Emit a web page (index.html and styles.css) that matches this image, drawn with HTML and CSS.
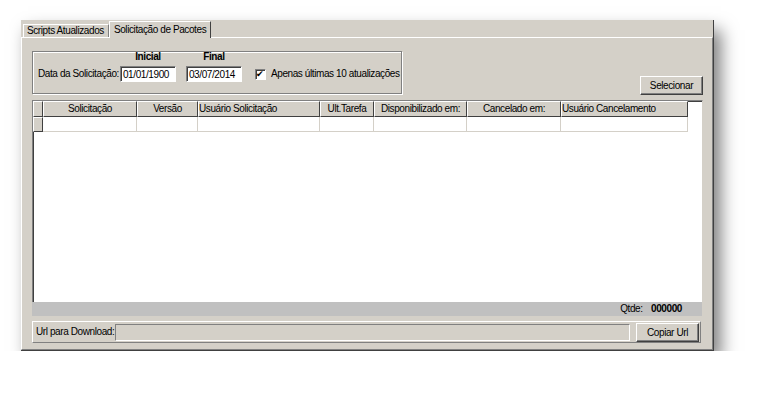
FILE: index.html
```html
<!DOCTYPE html>
<html lang="pt-BR">
<head>
    <meta charset="UTF-8">
    <title>Solicitação de Pacotes</title>
    <link rel="stylesheet" href="styles.css">
</head>
<body>
    <div class="window">
        <div class="tabs">
            <div class="tab">Scripts Atualizados</div>
            <div class="tab active">Solicitação de Pacotes</div>
        </div>
        <div class="panel">
            <div class="top-row">
                <div class="groupbox">
                    <span class="lbl">Data da Solicitação:</span>
                    <div class="datefield">
                        <span class="cap">Inicial</span>
                        <div class="edit">01/01/1900</div>
                    </div>
                    <div class="datefield">
                        <span class="cap">Final</span>
                        <div class="edit">03/07/2014</div>
                    </div>
                    <label class="check">
                        <span class="box">&#10004;</span>
                        Apenas últimas 10 atualizações
                    </label>
                </div>
                <div class="btn btn-sel">Selecionar</div>
            </div>
            <div class="grid">
                <table>
                    <colgroup>
                        <col style="width:10px"><col style="width:94px"><col style="width:61px"><col style="width:122px">
                        <col style="width:54px"><col style="width:93px"><col style="width:94px"><col style="width:127px">
                    </colgroup>
                    <thead>
                        <tr>
                            <th></th>
                            <th>Solicitação</th>
                            <th>Versão</th>
                            <th class="left">Usuário Solicitação</th>
                            <th>Ult.Tarefa</th>
                            <th>Disponibilizado em:</th>
                            <th>Cancelado em:</th>
                            <th class="left">Usuário Cancelamento</th>
                        </tr>
                    </thead>
                    <tbody>
                        <tr>
                            <td class="ind"></td>
                            <td></td><td></td><td></td><td></td><td></td><td></td><td></td>
                        </tr>
                    </tbody>
                </table>
            </div>
            <div class="status">Qtde: <b>000000</b></div>
            <div class="url-row">
                <span class="lbl">Url para Download:</span>
                <div class="url-field"></div>
                <div class="btn btn-copy">Copiar Url</div>
            </div>
        </div>
    </div>
</body>
</html>
```

FILE: styles.css
```css
body { margin: 0; background: #fff; font-family: "Liberation Sans", Arial, sans-serif; font-size: 10px; letter-spacing: -0.4px; color: #000; white-space: nowrap; }
.window { margin: 20px 0 0 21px; width: 692px; height: 330px; background: #d4d0c8; border-right: 1px solid #404040; border-bottom: 1px solid #404040; box-shadow: 7px 10px 16px rgba(0,0,0,0.5); display: flex; flex-direction: column; }
.tabs { display: flex; height: 17px; padding-left: 1px; align-items: flex-end; }
.tab { height: 12px; padding: 0 4px 0 3px; line-height: 12px; border-top: 1px solid #fff; border-left: 1px solid #fff; border-right: 1px solid #808080; background: #d4d0c8; margin-left: 1px; }
.tab.active { height: 16px; line-height: 15px; margin-left: 0; border-right: 1px solid #404040; position: relative; top: 1px; padding: 0 4px; }
.panel { flex: 1; border-top: 1px solid #fff; border-left: 1px solid #fff; border-right: 1px solid #808080; border-bottom: 1px solid #808080; padding: 13px 9px 5px 10px; display: flex; flex-direction: column; }
.top-row { display: flex; justify-content: space-between; align-items: flex-end; }
.groupbox { width: 370px; height: 43px; border: 1px solid #808080; box-shadow: inset 1px 1px 0 #fff, 1px 1px 0 #fff; display: flex; align-items: flex-end; padding: 0 0 11px 5px; box-sizing: border-box; }
.lbl { line-height: 16px; margin-right: 1px; }
.datefield { display: flex; flex-direction: column; align-items: center; margin-right: 10px; }
.cap { font-weight: bold; line-height: 12px; margin-bottom: 3px; }
.edit { width: 52px; height: 14px; background: #fff; border-top: 1px solid #808080; border-left: 1px solid #808080; border-right: 1px solid #fff; border-bottom: 1px solid #fff; box-shadow: inset 1px 1px 0 #404040; padding-left: 2px; line-height: 15px; }
.check { display: flex; align-items: center; gap: 5px; margin-left: 3px; line-height: 16px; }
.box { width: 9px; height: 9px; background: #fff; border-top: 1px solid #808080; border-left: 1px solid #808080; border-right: 1px solid #fff; border-bottom: 1px solid #fff; box-shadow: inset 1px 1px 0 #404040; font-size: 9px; line-height: 9px; text-align: center; letter-spacing: 0; }
.btn { height: 17px; line-height: 17px; text-align: center; background: #d4d0c8; border-top: 1px solid #fff; border-left: 1px solid #fff; border-right: 1px solid #404040; border-bottom: 1px solid #404040; box-shadow: inset -1px -1px 0 #808080; }
.btn-sel { width: 61px; margin-bottom: -1px; }
.grid { margin-top: 6px; width: 669px; height: 201px; background: #fff; border-top: 1px solid #808080; border-left: 1px solid #808080; box-shadow: inset 1px 1px 0 #404040; border-right: 1px solid #d4d0c8; overflow: hidden; }
table { border-collapse: separate; border-spacing: 0; table-layout: fixed; width: 655px; }
th { height: 14px; font-weight: normal; background: #d4d0c8; border-top: 1px solid #fff; border-left: 1px solid #fff; border-right: 1px solid #404040; border-bottom: 1px solid #404040; padding: 0; line-height: 14px; overflow: hidden; }
th.left { text-align: left; }
td { height: 14px; border-right: 1px solid #d4d0c8; border-bottom: 1px solid #d4d0c8; padding: 0; }
td.ind { background: #d4d0c8; border-top: 1px solid #fff; border-left: 1px solid #fff; border-right: 1px solid #404040; border-bottom: 1px solid #404040; height: 13px; }
.status { width: 670px; height: 14px; background: #c0c0c0; text-align: right; line-height: 14px; padding-right: 20px; box-sizing: border-box; }
.status b { margin-left: 6px; }
.url-row { margin-top: 5px; width: 669px; height: 22px; border-top: 1px solid #fff; border-left: 1px solid #fff; border-right: 1px solid #808080; border-bottom: 1px solid #808080; display: flex; align-items: center; padding-left: 3px; box-sizing: border-box; }
.url-field { flex: 1; height: 17px; box-sizing: border-box; border-top: 1px solid #808080; border-left: 1px solid #808080; border-right: 1px solid #fff; border-bottom: 1px solid #fff; }
.btn-copy { width: 61px; margin: 0 1px 0 6px; }
```
